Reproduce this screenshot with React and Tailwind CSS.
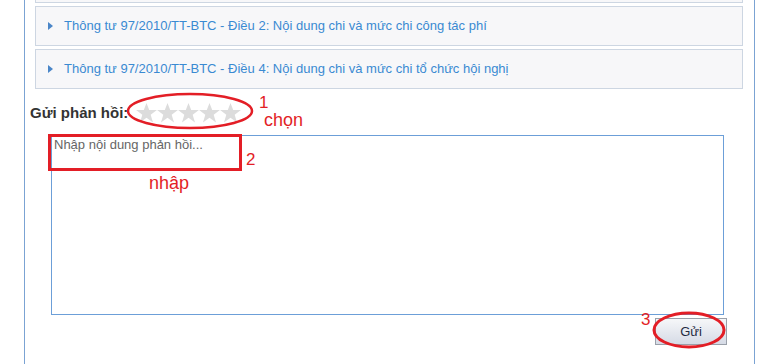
import React from 'react';

const items = [
  '',
  'Thông tư 97/2010/TT-BTC - Điều 2: Nội dung chi và mức chi công tác phí',
  'Thông tư 97/2010/TT-BTC - Điều 4: Nội dung chi và mức chi tổ chức hội nghị',
];

function Star() {
  return (
    <svg width="21" height="20" viewBox="0 0 24 23">
      <path d="M12 0l3.1 8H24l-7.2 5.4 2.7 9L12 17l-7.5 5.4 2.7-9L0 8h8.9z" fill="#dcdcdc" />
    </svg>
  );
}

export default function App() {
  return (
    <div className="relative w-[769px] h-[364px] overflow-hidden bg-white font-['Liberation_Sans',Arial,sans-serif]">
      <div className="ml-[24px] w-[731px] h-[364px] flex flex-col border-x border-[#7ba3d3] pl-[10px] pr-[11px]">
        {/* accordion rows */}
        <div className="mt-[-37px] flex flex-col gap-[3px]">
          {items.map((t, i) => (
            <div key={i} className="h-[40px] flex items-center border border-[#cdd6e2] bg-[#f7f7f9] pl-[12px]">
              {t && (
                <>
                  <span className="w-0 h-0 border-y-[4px] border-y-transparent border-l-[5px] border-l-[#4a86c8] mr-[11px]" />
                  <span className="text-[13px] text-[#3a8ad2]">{t}</span>
                </>
              )}
            </div>
          ))}
        </div>

        {/* feedback */}
        <div className="ml-[-5px] mt-[12px] flex items-center h-[24px]">
          <span className="text-[15px] font-bold text-[#333]">Gửi phản hồi:</span>
          <div className="ml-[8px] flex">
            <Star /><Star /><Star /><Star /><Star />
          </div>
        </div>

        <div className="ml-[16px] mt-[10px] w-[673px] h-[180px] border border-[#6c9fd8] px-[2px] pt-[1px] text-[13px] leading-[16px] text-[#666]">
          Nhập nội dung phản hồi...
        </div>

        <div className="flex justify-end mr-[16px] mt-[3px]">
          <button className="w-[72px] h-[27px] border border-[#9aa0aa] bg-gradient-to-b from-[#f6f7f9] to-[#d6dbe6] text-[13px] text-[#1e2a40]">
            Gửi
          </button>
        </div>
      </div>

      {/* red annotations */}
      <svg className="absolute left-0 top-0 pointer-events-none" width="769" height="364">
        <ellipse cx="190" cy="111" rx="62" ry="17" fill="none" stroke="#e31e26" strokeWidth="2.5" />
        <rect x="49.5" y="135.5" width="191" height="34" fill="none" stroke="#e31e26" strokeWidth="3" />
        <ellipse cx="689" cy="330" rx="35" ry="17" fill="none" stroke="#e31e26" strokeWidth="3" />
      </svg>
      <span className="absolute left-[259px] top-[94px] text-[17px] leading-none text-[#e31e26]">1</span>
      <span className="absolute left-[264px] top-[111px] text-[18px] leading-none text-[#e31e26]">chọn</span>
      <span className="absolute left-[246px] top-[151px] text-[17px] leading-none text-[#e31e26]">2</span>
      <span className="absolute left-[149px] top-[174px] text-[18px] leading-none text-[#e31e26]">nhập</span>
      <span className="absolute left-[641px] top-[311px] text-[17px] leading-none text-[#e31e26]">3</span>
    </div>
  );
}
